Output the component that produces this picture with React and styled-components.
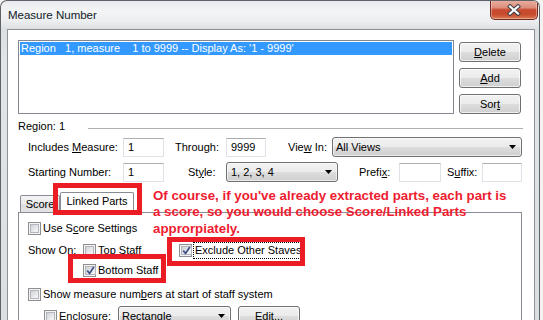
import React from 'react';
import styled, { createGlobalStyle } from 'styled-components';

const UI = `"Liberation Sans", Arial, Helvetica, sans-serif`;

const Global = createGlobalStyle`
  html, body { margin: 0; padding: 0; background: #f3f3f3; }
  body { font-family: ${UI}; font-size: 11px; color: #000; }
  * { box-sizing: border-box; }
`;

const Window = styled.div`
  position: relative;
  width: 540px;
  height: 320px;
  overflow: hidden;
  display: flex;
  flex-direction: column;
  border: 1px solid #5f6367;
  border-bottom: 0;
  border-radius: 7px 7px 0 0;
  background: linear-gradient(180deg, #e8ebee 0px, #f3f4f5 10px, #eceef0 20px, #dde0e3 28px, #e2e5e8 60px, #dcdfe2 100%);
  font-family: ${UI};
  font-size: 11px;
`;

const TitleBar = styled.div`
  height: 28px;
  flex: none;
  display: flex;
  align-items: flex-start;
`;

const Title = styled.div`
  padding: 7px 0 0 7px;
  font-size: 11.5px;
  line-height: 14px;
  color: #101a26;
`;

const CloseBtn = styled.div`
  margin-left: auto;
  margin-top: -1px;
  margin-right: 1px;
  width: 48px;
  height: 20px;
  border: 1px solid #6f2a1f;
  border-top: 0;
  border-radius: 0 0 5px 5px;
  background: linear-gradient(180deg, #e9b1a3 0%, #dd8e7b 40%, #c84a30 52%, #c64a2c 75%, #d97a52 100%);
  box-shadow: inset 0 0 0 1px rgba(255, 220, 210, 0.45);
  display: flex;
  align-items: center;
  justify-content: center;
`;

const Body = styled.div`
  flex: 1;
  display: flex;
  margin: 0 4px 0 6px;
  min-height: 0;
`;

const Client = styled.div`
  flex: 1;
  background: #fff;
  border: 1px solid #8e9296;
  border-bottom: 0;
  padding: 10px 11px 0 10px;
  display: flex;
  flex-direction: column;
  min-height: 0;
`;

const TopRow = styled.div`
  display: flex;
  align-items: flex-start;
`;

const ListBox = styled.div`
  width: 436px;
  height: 74px;
  border: 1px solid #828790;
  padding: 1px;
`;

const ListItem = styled.div`
  height: 13px;
  line-height: 13px;
  padding-left: 1px;
  white-space: pre;
  background: ${(p) => (p.$selected ? '#3399ff' : 'transparent')};
  color: ${(p) => (p.$selected ? '#fff' : '#000')};
`;

const ButtonCol = styled.div`
  margin-left: 5px;
  margin-top: 2px;
  display: flex;
  flex-direction: column;
  gap: 6px;
`;

const Button = styled.div`
  width: ${(p) => p.$w || 62}px;
  height: 20px;
  margin-left: ${(p) => p.$ml || 0}px;
  border: 1px solid #707070;
  border-radius: 3px;
  background: linear-gradient(180deg, #f2f2f2 0%, #ebebeb 50%, #dddddd 51%, #cfcfcf 100%);
  box-shadow: inset 0 0 0 1px rgba(255, 255, 255, 0.7);
  display: flex;
  align-items: center;
  justify-content: center;
  line-height: 13px;
`;

const RegionRow = styled.div`
  display: flex;
  align-items: center;
  margin-top: 6px;
  height: 13px;
  line-height: 13px;
`;

const Rule = styled.div`
  flex: 1;
  height: 1px;
  margin-left: 23px;
  margin-top: 3px;
  background: #aeb1b4;
`;

const FieldRow = styled.div`
  display: flex;
  align-items: center;
  height: 20px;
  margin-top: ${(p) => p.$mt}px;
`;

const Label = styled.div`
  width: ${(p) => p.$w}px;
  margin-left: ${(p) => p.$ml || 0}px;
  flex: none;
  line-height: 13px;
  white-space: nowrap;
`;

const Input = styled.div`
  width: ${(p) => p.$w}px;
  height: 19px;
  flex: none;
  border: 1px solid #dfe3e9;
  border-top-color: #abadb3;
  padding-left: 4px;
  line-height: 17px;
  background: #fff;
`;

const Combo = styled.div`
  width: ${(p) => p.$w}px;
  height: 20px;
  flex: none;
  border: 1px solid #707070;
  border-radius: 3px;
  background: linear-gradient(180deg, #f2f2f2 0%, #ebebeb 50%, #dddddd 51%, #cfcfcf 100%);
  box-shadow: inset 0 0 0 1px rgba(255, 255, 255, 0.6);
  display: flex;
  align-items: center;
  padding: 0 5px 0 ${(p) => p.$pl || 3}px;
  line-height: 13px;
`;

const ComboText = styled.span`
  flex: 1;
  white-space: nowrap;
`;

const TabStrip = styled.div`
  display: flex;
  align-items: flex-end;
  height: 21px;
  margin-top: 10px;
  margin-bottom: -1px;
  padding-left: 2px;
  position: relative;
  z-index: 1;
`;

const Tab = styled.div`
  width: ${(p) => p.$w}px;
  height: ${(p) => (p.$active ? 21 : 17)}px;
  margin-bottom: ${(p) => (p.$active ? 0 : 1)}px;
  border: 1px solid #898c95;
  border-bottom: 0;
  border-radius: 2px 2px 0 0;
  background: ${(p) => (p.$active ? '#fff' : 'linear-gradient(180deg, #f3f3f3 0%, #ebebeb 50%, #dedede 51%, #e3e3e3 100%)')};
  display: flex;
  align-items: center;
  justify-content: center;
  padding-bottom: ${(p) => (p.$active ? 3 : 0)}px;
  line-height: 13px;
`;

const Panel = styled.div`
  width: 504px;
  flex: 1;
  border: 1px solid #898c95;
  border-bottom: 0;
  background: #fff;
  padding: 9px 0 0 9px;
  display: flex;
  flex-direction: column;
`;

const CheckRow = styled.div`
  display: flex;
  align-items: center;
  height: ${(p) => p.$h || 13}px;
  margin-top: ${(p) => p.$mt || 0}px;
  padding-left: ${(p) => p.$pl || 0}px;
  line-height: 13px;
  white-space: nowrap;
`;

const Group = styled.div`
  width: ${(p) => p.$w}px;
  flex: none;
  display: flex;
  align-items: center;
`;

const Box = styled.span`
  width: 13px;
  height: 13px;
  flex: none;
  border: 1px solid #8f8f8f;
  background: #f4f4f4;
  padding: 1px;
  display: flex;
`;

const BoxInner = styled.span`
  flex: 1;
  border: 1px solid #b3b7bd;
  background: linear-gradient(135deg, #cfd2d6 0%, #e6e8ea 55%, #f7f7f7 100%);
  display: flex;
  align-items: center;
  justify-content: center;
`;

const CheckText = styled.span`
  margin-left: ${(p) => p.$ml ?? 2}px;
`;

const FocusText = styled.span`
  margin-left: 1px;
  border: 1px dotted #000;
  padding: 1px 1px;
  line-height: 13px;
`;

const RedBox = styled.div`
  position: absolute;
  left: ${(p) => p.$x}px;
  top: ${(p) => p.$y}px;
  width: ${(p) => p.$w}px;
  height: ${(p) => p.$h}px;
  border: 5px solid #ec1c24;
  z-index: 5;
`;

const Note = styled.div`
  position: absolute;
  left: 152px;
  top: 186.5px;
  z-index: 4;
  font-family: ${UI};
  font-weight: bold;
  font-size: 13.3px;
  line-height: 16.5px;
  color: #ee1c30;
  white-space: pre;
`;

const Check = ({ checked }) => (
  <Box>
    <BoxInner>
      {checked && (
        <svg width="9" height="9" viewBox="0 0 9 9">
          <path d="M1.2 4.6 L3.6 7.4 L7.8 1" fill="none" stroke="#3d4f86" strokeWidth="1.7" />
        </svg>
      )}
    </BoxInner>
  </Box>
);

const Arrow = () => (
  <svg width="7" height="4" viewBox="0 0 7 4">
    <path d="M0 0 H7 L3.5 4 Z" fill="#000" />
  </svg>
);

const CloseX = () => (
  <svg width="14" height="12" viewBox="0 0 14 12">
    <path d="M3 2.5 L11 9.5 M11 2.5 L3 9.5" stroke="#3f3f46" strokeWidth="4.2" strokeLinecap="square" />
    <path d="M3 2.5 L11 9.5 M11 2.5 L3 9.5" stroke="#fff" strokeWidth="2.2" strokeLinecap="square" />
  </svg>
);

export default function App() {
  return (
    <>
      <Global />
      <Window>
        <TitleBar>
          <Title>Measure Number</Title>
          <CloseBtn>
            <CloseX />
          </CloseBtn>
        </TitleBar>
        <Body>
          <Client>
            <TopRow>
              <ListBox>
                <ListItem $selected>{"Region   1, measure    1 to 9999 -- Display As: '1 - 9999'"}</ListItem>
              </ListBox>
              <ButtonCol>
                <Button><u>D</u>elete</Button>
                <Button><u>A</u>dd</Button>
                <Button>Sor<u>t</u></Button>
              </ButtonCol>
            </TopRow>

            <RegionRow>
              <span>Region: 1</span>
              <Rule />
            </RegionRow>

            <FieldRow $mt={4}>
              <Label $ml={10} $w={95}>Includes <u>M</u>easure:</Label>
              <Input $w={41}>1</Input>
              <Label $ml={11} $w={51}>Through:</Label>
              <Input $w={40}>9999</Input>
              <Label $ml={22} $w={44}>Vie<u>w</u> In:</Label>
              <Combo $w={190}>
                <ComboText>All Views</ComboText>
                <Arrow />
              </Combo>
            </FieldRow>

            <FieldRow $mt={5}>
              <Label $ml={10} $w={95}>Startin<u>g</u> Number:</Label>
              <Input $w={41}>1</Input>
              <Label $ml={24} $w={38}>St<u>y</u>le:</Label>
              <Combo $w={112} $pl={4}>
                <ComboText>1, 2, 3, 4</ComboText>
                <Arrow />
              </Combo>
              <Label $ml={21} $w={40}>Prefi<u>x</u>:</Label>
              <Input $w={42} />
              <Label $ml={6} $w={35}>S<u>u</u>ffix:</Label>
              <Input $w={40} />
            </FieldRow>

            <TabStrip>
              <Tab $w={40}>Score</Tab>
              <Tab $w={74} $active>Linked Parts</Tab>
            </TabStrip>
            <Panel>
              <CheckRow>
                <Check />
                <CheckText>Use S<u>c</u>ore Settings</CheckText>
              </CheckRow>
              <CheckRow $mt={7} $h={17}>
                <Group $w={55}>Show On:</Group>
                <Group $w={96}>
                  <Check />
                  <CheckText>T<u>o</u>p Staff</CheckText>
                </Group>
                <Check checked />
                <FocusText>Exclude Other Staves</FocusText>
              </CheckRow>
              <CheckRow $mt={5} $pl={55}>
                <Check checked />
                <CheckText>Bottom Staff</CheckText>
              </CheckRow>
              <CheckRow $mt={11}>
                <Check />
                <CheckText>Show measure num<u>b</u>ers at start of staff system</CheckText>
              </CheckRow>
              <CheckRow $mt={5} $pl={16} $h={20}>
                <Check />
                <Label $ml={2} $w={59}>Enclosure:</Label>
                <Combo $w={113}>
                  <ComboText>Rectangle</ComboText>
                  <Arrow />
                </Combo>
                <Button $ml={7} $w={62}>Edit...</Button>
              </CheckRow>
            </Panel>
          </Client>
        </Body>

        <RedBox $x={52} $y={182} $w={89} $h={32} />
        <RedBox $x={166} $y={236} $w={138} $h={29} />
        <RedBox $x={67} $y={253} $w={98} $h={29} />
        <Note>{"Of course, if you've already extracted parts, each part is\na score, so you would choose Score/Linked Parts\napprorpiately."}</Note>
      </Window>
    </>
  );
}
